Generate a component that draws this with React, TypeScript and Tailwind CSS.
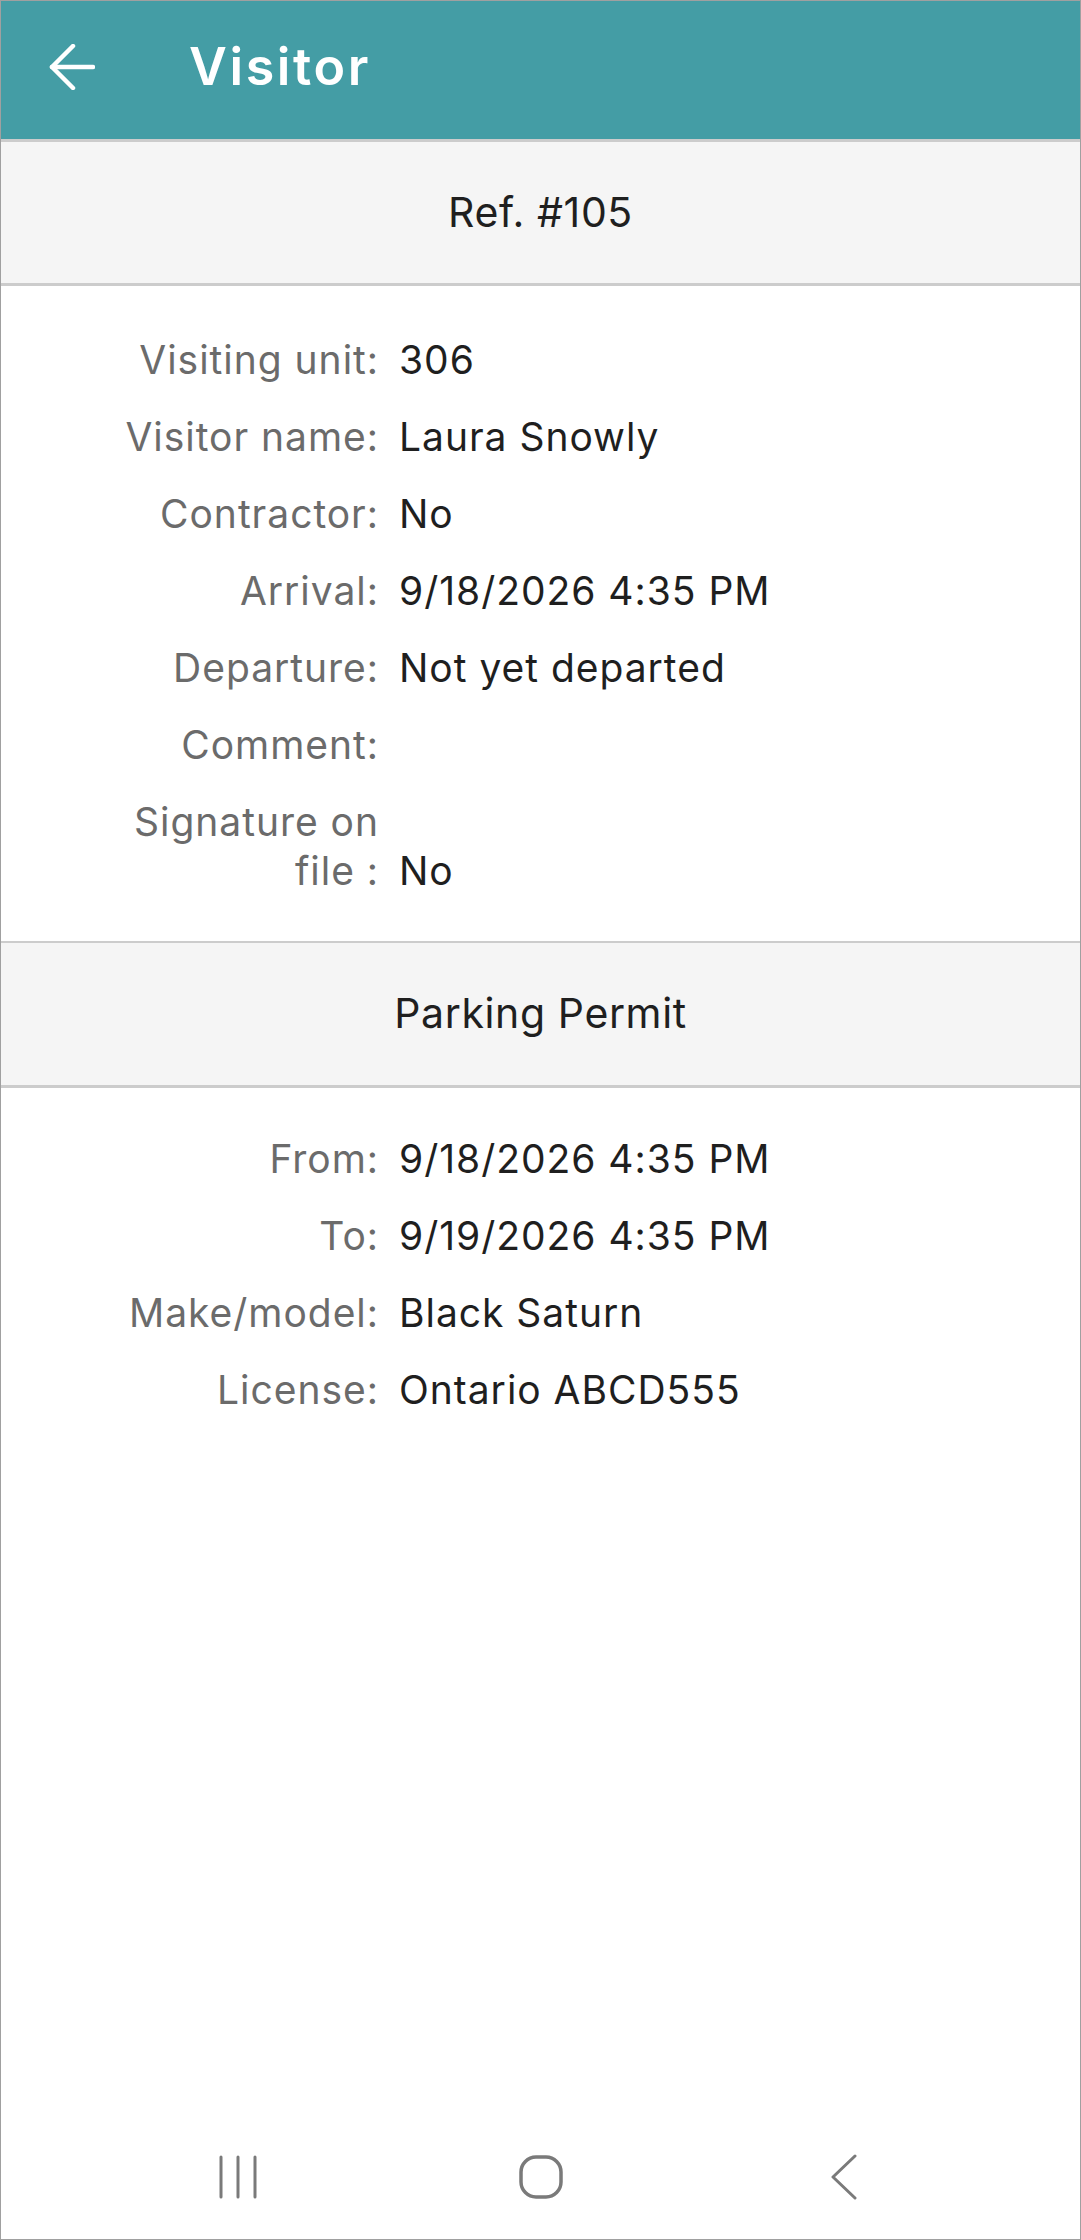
import React from "react";

const font = { fontFamily: "Inter, 'Noto Sans', sans-serif" };

function Row({ label, value }: { label: string; value?: string }) {
  return (
    <div className="grid grid-cols-[378px_1fr] gap-x-[20px] leading-[49px]">
      <div className="text-right text-[#6b6b6b] pl-[100px]">{label}</div>
      <div className="text-[#1f1f1f]">{value ?? ""}</div>
    </div>
  );
}

function SignatureRow() {
  return (
    <div className="grid grid-cols-[378px_1fr] gap-x-[20px] leading-[49px]">
      <div className="text-right text-[#6b6b6b] pl-[100px]">
        <div>Signature on</div>
        <div>file :</div>
      </div>
      <div className="flex flex-col justify-end text-[#1f1f1f]">No</div>
    </div>
  );
}

function SectionHeader({ title, top }: { title: string; top?: boolean }) {
  return (
    <div
      className={
        "h-[147px] bg-[#f5f5f5] border-b-[3px] border-[#cccccc] flex items-center justify-center text-[41px] tracking-[0.015em] text-[#1f1f1f] " +
        (top ? "border-t-[3px]" : "border-t-[2px]")
      }
    >
      {title}
    </div>
  );
}

export default function App() {
  return (
    <div
      style={font}
      className="w-[1081px] h-[2240px] flex flex-col bg-white border border-[#a0a0a0] overflow-hidden"
    >
      <div className="h-[138px] bg-[#449da5] flex items-center shrink-0 pb-[6px]">
        <svg
          width="46"
          height="46"
          viewBox="0 0 46 46"
          className="ml-[48px]"
          fill="none"
          stroke="white"
          strokeWidth="4.5"
          strokeLinecap="round"
          strokeLinejoin="round"
        >
          <path d="M44 23H3" />
          <path d="M24 2L3 23L24 44" />
        </svg>
        <div className="ml-[94px] text-white text-[52px] font-semibold tracking-[0.05em]">Visitor</div>
      </div>

      <div className="flex-1 flex flex-col">
        <SectionHeader title="Ref. #105" top />
        <div className="flex flex-col gap-[28px] pt-[49px] pb-[46px] text-[39px] tracking-[0.025em]">
          <Row label="Visiting unit:" value="306" />
          <Row label="Visitor name:" value="Laura Snowly" />
          <Row label="Contractor:" value="No" />
          <Row label="Arrival:" value="9/18/2026 4:35 PM" />
          <Row label="Departure:" value="Not yet departed" />
          <Row label="Comment:" />
          <SignatureRow />
        </div>
        <SectionHeader title="Parking Permit" />
        <div className="flex flex-col gap-[28px] pt-[46px] text-[39px] tracking-[0.025em]">
          <Row label="From:" value="9/18/2026 4:35 PM" />
          <Row label="To:" value="9/19/2026 4:35 PM" />
          <Row label="Make/model:" value="Black Saturn" />
          <Row label="License:" value="Ontario ABCD555" />
        </div>
      </div>

      <div className="h-[125px] shrink-0 flex items-center justify-center">
        <div className="w-[303px] flex justify-center">
          <svg width="40" height="44" viewBox="0 0 40 44" fill="none" stroke="#7a7a7a" strokeWidth="3" strokeLinecap="round">
            <path d="M3 2V42" />
            <path d="M20 2V42" />
            <path d="M37 2V42" />
          </svg>
        </div>
        <div className="w-[303px] flex justify-center">
          <svg width="46" height="46" viewBox="0 0 46 46" fill="none" stroke="#7a7a7a" strokeWidth="3.5">
            <rect x="3" y="3" width="40" height="40" rx="15" />
          </svg>
        </div>
        <div className="w-[303px] flex justify-center">
          <svg width="30" height="46" viewBox="0 0 30 46" fill="none" stroke="#7a7a7a" strokeWidth="3" strokeLinecap="round" strokeLinejoin="round">
            <path d="M26 2L4 23L26 44" />
          </svg>
        </div>
      </div>
    </div>
  );
}
